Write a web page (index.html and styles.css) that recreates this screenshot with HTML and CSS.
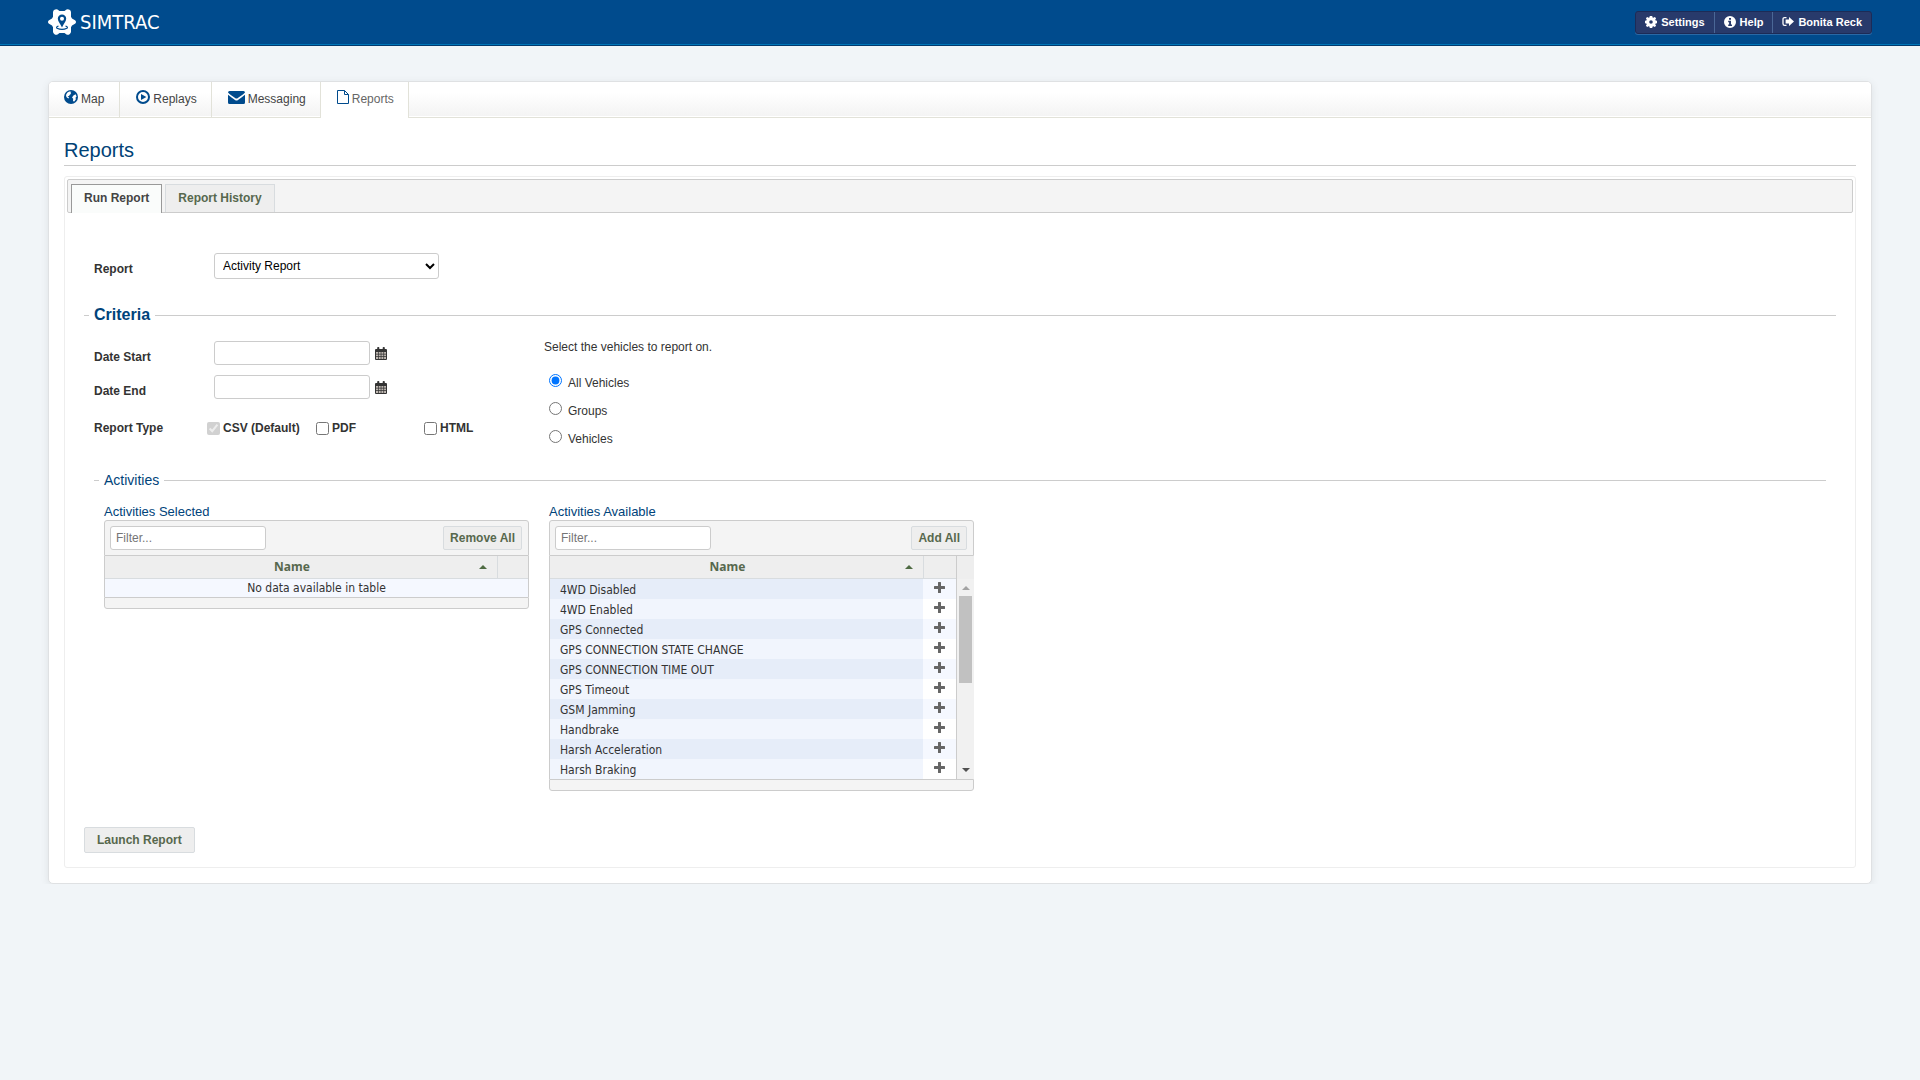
FILE: index.html
```html
<!DOCTYPE html>
<html lang="en">
<head>
<meta charset="utf-8">
<title>SIMTRAC - Reports</title>
<link rel="stylesheet" href="styles.css">
</head>
<body>
<svg class="sprite" aria-hidden="true">
  <symbol id="i-globe" viewBox="0 0 14 14"><circle cx="7" cy="7" r="7" fill="currentColor"/><path d="M3.200 2.800 5.200 1.500 7.400 1.700 6.400 3 7.200 3.800 5.800 4.800 5 6 3.600 6.200 5.200 7.800 4.200 8.400 2.400 7 2 5zM9.400 5.600l2.200-1.400 1 2.200-1 1.200.2 2-1.800 2.200-1-1 .2-2L8 7.600z" fill="#fff"/></symbol>
  <symbol id="i-play" viewBox="0 0 14 14"><circle cx="7" cy="7" r="6" fill="none" stroke="currentColor" stroke-width="2"/><path d="M5 3.900v6.200L10.400 7z" fill="currentColor"/></symbol>
  <symbol id="i-mail" viewBox="0 0 17 13"><path d="M1.500 0h14A1.500 1.500 0 0 1 17 1.500C16 3 12 5.500 9.600 7.200Q8.500 8 7.400 7.200C5 5.500 1 3 0 1.500A1.500 1.500 0 0 1 1.500 0zM0 3.800C2 5.600 5 7.400 7 8.900Q8.500 9.900 10 8.900C12 7.400 15 5.600 17 3.800V11.500A1.500 1.500 0 0 1 15.500 13h-14A1.500 1.500 0 0 1 0 11.500z" fill="currentColor"/></symbol>
  <symbol id="i-file" viewBox="0 0 12 14"><path d="M.5.5h7l4 4v9H.5zM7.500.5v4h4" fill="none" stroke="currentColor"/></symbol>
  <symbol id="i-cog" viewBox="0 0 12 12"><path d="M4.800 0h2.400l.4 1.500.8.3L9.800 1l1.300 1.300-.8 1.300.3.9 1.400.3v2.400l-1.400.4-.3.8.8 1.400-1.300 1.300-1.400-.8-.8.3-.4 1.400H4.800l-.4-1.400-.8-.3-1.400.8L.9 9.800l.8-1.400-.3-.8L0 7.200V4.800l1.400-.3.3-.9L.9 2.300 2.200 1l1.400.8.8-.3zM6 4.200a1.800 1.800 0 1 0 0 3.600 1.800 1.800 0 0 0 0-3.600z" fill="currentColor" fill-rule="evenodd"/></symbol>
  <symbol id="i-info" viewBox="0 0 12 12"><path d="M6 0a6 6 0 1 0 0 12A6 6 0 0 0 6 0zM5 2h2v1.700H5zM4.200 4.800H7v3.700h1V10H4.200V8.500h.9V6.200h-.9z" fill="currentColor" fill-rule="evenodd"/></symbol>
  <symbol id="i-out" viewBox="0 0 12 12"><path d="M4.500 1.600H2.600Q1 1.600 1 3.200v4.600q0 1.600 1.600 1.600h1.900" fill="none" stroke="currentColor" stroke-width="1.300"/><path d="M7 1l5 4.500L7 10V7.500H3.600v-4H7z" fill="currentColor"/></symbol>
  <symbol id="i-cal" viewBox="0 0 12 13"><path d="M1 2h1.200V.8q0-.8.8-.8h.5q.8 0 .8.800V2h3.400V.8q0-.8.8-.8H9q.8 0 .8.800V2H11q1 0 1 1v9q0 1-1 1H1q-1 0-1-1V3q0-1 1-1z" fill="currentColor"/><path d="M1 5h2v1.700H1zm2.700 0h2v1.700h-2zm2.700 0h2v1.700h-2zM9.100 5H11v1.700H9.100zM1 7.500h2v1.700H1zm2.700 0h2v1.700h-2zm2.700 0h2v1.700h-2zm2.700 0H11v1.700H9.100zM1 10h2v2H1zm2.700 0h2v2h-2zm2.700 0h2v2h-2zm2.700 0H11v2H9.100z" fill="#bfb8b2"/></symbol>
  <symbol id="i-plus" viewBox="0 0 11 11"><path d="M4 .6q0-.6.600-.6h1.800q.6 0 .6.600V4h3.400q.6 0 .6.600v1.800q0 .6-.6.600H7v3.400q0 .6-.6.600H4.600q-.6 0-.6-.6V7H.6Q0 7 0 6.400V4.600Q0 4 .6 4H4z" fill="currentColor"/></symbol>
</svg>

<header class="topbar">
  <a class="brand" href="#">
    <svg class="brand-mark" viewBox="0 0 28 26" aria-hidden="true"><path d="M6.500.8Q8-.2 9.500.6L11.500 2h5l2-1.400q1.500-.8 3 .2 1.500 1 1.500 2.400v4.500l1 1.800 3 1.700q1 .7 1 1.800t-1 1.800l-3 1.700-1 1.800v4.500q0 1.400-1.500 2.400t-3 .2l-2-1.400h-5l-2 1.400q-1.500.8-3-.2-1.500-1-1.500-2.400v-4.500l-1-1.800-3-1.700Q0 14.100 0 13t1-1.800l3-1.700 1-1.800V3.200Q5 1.800 6.500.8z" fill="#fff"/><path d="M14 5.500a4.200 4.200 0 0 0-4.200 4.200c0 2.600 2.700 5.500 4.200 8.700 1.500-3.200 4.200-6.100 4.200-8.700A4.200 4.200 0 0 0 14 5.500zm0 2.300a2 2 0 1 1 0 4 2 2 0 0 1 0-4z" fill="#004b8d" fill-rule="evenodd"/><path d="M10.500 17q-2.800 1-1.500 2.200 5 2.300 10 0 1.300-1.200-1.500-2.200" fill="none" stroke="#004b8d" stroke-width="1.200"/></svg>
    <span>SIMTRAC</span>
  </a>
  <nav class="user-menu">
    <a href="#"><svg><use href="#i-cog"/></svg>Settings</a>
    <a href="#"><svg><use href="#i-info"/></svg>Help</a>
    <a href="#"><svg><use href="#i-out"/></svg>Bonita Reck</a>
  </nav>
</header>

<main class="card">
  <nav class="main-tabs">
    <a href="#"><svg class="icon"><use href="#i-globe"/></svg>Map</a>
    <a href="#"><svg class="icon"><use href="#i-play"/></svg>Replays</a>
    <a href="#"><svg class="icon-mail"><use href="#i-mail"/></svg>Messaging</a>
    <a href="#" class="current"><svg class="icon-file"><use href="#i-file"/></svg>Reports</a>
  </nav>

  <div class="content">
    <h1>Reports</h1>
    <section class="panel">
      <nav class="sub-tabs">
        <a href="#" class="active">Run Report</a>
        <a href="#">Report History</a>
      </nav>

      <form class="report-form">
        <div class="row report-row">
          <label class="name" for="report">Report</label>
          <select id="report"><option>Activity Report</option></select>
        </div>

        <fieldset class="criteria">
          <legend>Criteria</legend>
          <div class="columns">
            <div class="dates">
              <div class="row date-row">
                <label class="name" for="start">Date Start</label>
                <input type="text" id="start">
                <svg class="cal"><use href="#i-cal"/></svg>
              </div>
              <div class="row date-row">
                <label class="name" for="end">Date End</label>
                <input type="text" id="end">
                <svg class="cal"><use href="#i-cal"/></svg>
              </div>
              <div class="row type-row">
                <span class="name">Report Type</span>
                <label class="check"><input type="checkbox" checked disabled>CSV (Default)</label>
                <label class="check"><input type="checkbox">PDF</label>
                <label class="check"><input type="checkbox">HTML</label>
              </div>
            </div>
            <div class="vehicles">
              <p>Select the vehicles to report on.</p>
              <label><input type="radio" name="scope" checked><span>All Vehicles</span></label>
              <label><input type="radio" name="scope"><span>Groups</span></label>
              <label><input type="radio" name="scope"><span>Vehicles</span></label>
            </div>
          </div>

          <fieldset class="activities">
            <legend>Activities</legend>
            <div class="lists">
              <section class="list">
                <h2>Activities Selected</h2>
                <div class="toolbar">
                  <input type="text" placeholder="Filter..." aria-label="Filter selected activities">
                  <button type="button">Remove All</button>
                </div>
                <table class="selected">
                  <thead><tr><th><div class="sort"><span>Name</span></div></th><th class="action"></th></tr></thead>
                  <tbody><tr><td colspan="2">No data available in table</td></tr></tbody>
                </table>
                <div class="foot"></div>
              </section>
              <section class="list">
                <h2>Activities Available</h2>
                <div class="toolbar">
                  <input type="text" placeholder="Filter..." aria-label="Filter available activities">
                  <button type="button">Add All</button>
                </div>
                <div class="scroller">
                  <table class="available">
                    <thead><tr><th><div class="sort"><span>Name</span></div></th><th class="action"></th></tr></thead>
                    <tbody>
                      <tr><td>4WD Disabled</td><td><svg><use href="#i-plus"/></svg></td></tr>
                      <tr><td>4WD Enabled</td><td><svg><use href="#i-plus"/></svg></td></tr>
                      <tr><td>GPS Connected</td><td><svg><use href="#i-plus"/></svg></td></tr>
                      <tr><td>GPS CONNECTION STATE CHANGE</td><td><svg><use href="#i-plus"/></svg></td></tr>
                      <tr><td>GPS CONNECTION TIME OUT</td><td><svg><use href="#i-plus"/></svg></td></tr>
                      <tr><td>GPS Timeout</td><td><svg><use href="#i-plus"/></svg></td></tr>
                      <tr><td>GSM Jamming</td><td><svg><use href="#i-plus"/></svg></td></tr>
                      <tr><td>Handbrake</td><td><svg><use href="#i-plus"/></svg></td></tr>
                      <tr><td>Harsh Acceleration</td><td><svg><use href="#i-plus"/></svg></td></tr>
                      <tr><td>Harsh Braking</td><td><svg><use href="#i-plus"/></svg></td></tr>
                    </tbody>
                  </table>
                  <div class="side">
                    <div class="side-head"></div>
                    <div class="scrollbar">
                      <span class="arrow up"></span>
                      <span class="thumb"></span>
                      <span class="arrow down"></span>
                    </div>
                  </div>
                </div>
                <div class="foot"></div>
              </section>
            </div>
          </fieldset>
        </fieldset>

        <button type="submit" class="launch">Launch Report</button>
      </form>
    </section>
  </div>
</main>
</body>
</html>
```
FILE: styles.css
```css
* { box-sizing: border-box; }

body {
  margin: 0;
  background: #f1f5f8;
  color: #333;
  font: 12px/18px "Liberation Sans", Arial, sans-serif;
}

a { color: inherit; text-decoration: none; }
svg { display: block; flex: none; }
.sprite { position: absolute; width: 0; height: 0; }

/* top bar */
.topbar {
  display: flex;
  justify-content: space-between;
  align-items: flex-start;
  height: 46px;
  padding: 9px 48px 0;
  background: #004b8d;
  border-bottom: 1px solid #003a70;
  box-shadow: inset 0 -1px #0076b8;
}
.brand {
  display: flex;
  align-items: center;
  gap: 4px;
  color: #fff;
  font: 20px/26px "DejaVu Sans Condensed", "DejaVu Sans", sans-serif;
}
.brand-mark { width: 28px; height: 26px; }
.user-menu {
  display: flex;
  height: 23px;
  margin-top: 2px;
  border: 1px solid #1c2b57;
  border-radius: 3px;
  background: #283a6b;
  box-shadow: 0 1px #2a68a5;
  color: #fff;
  font-size: 11px;
  font-weight: bold;
}
.user-menu a {
  display: flex;
  gap: 4px;
  padding: 1px 9px 0;
}
.user-menu a + a { border-left: 1px solid #4a6796; }
.user-menu svg { width: 12px; height: 12px; margin-top: 3px; }

/* page card */
.card {
  margin: 35px 48px 0;
  border: 1px solid #dfe1e3;
  border-radius: 5px;
  background: #fff;
  box-shadow: 0 2px 8px rgba(0, 0, 0, .08);
}
.main-tabs {
  display: flex;
  height: 36px;
  border-bottom: 1px solid #e2e2d9;
  border-radius: 4px 4px 0 0;
  background: linear-gradient(#fff 30%, #f3f3f3);
  box-shadow: inset 0 -1px #fff;
  color: #444;
}
.main-tabs a {
  display: flex;
  gap: 3px;
  padding: 8px 15px 0;
  border-right: 1px solid #e2e2d9;
}
.main-tabs a + a { padding: 8px 14px 0 16px; }
.main-tabs .current {
  height: 36px;
  background: #fff;
  color: #666;
}
.main-tabs svg { color: #004b8d; }
.icon { width: 14px; height: 14px; }
.icon-mail { width: 17px; height: 13px; margin-top: 1px; }
.icon-file { width: 12px; height: 14px; }

.content { padding: 18px 15px 15px; }
h1 {
  margin: 0 0 10px;
  padding-bottom: 1px;
  border-bottom: 1px solid #ccc;
  color: #004276;
  font: 20px/28px "Liberation Sans", Arial, sans-serif;
}

.panel {
  padding: 2px;
  border: 1px solid #eee;
  border-radius: 3px;
}
.sub-tabs {
  display: flex;
  gap: 3px;
  height: 34px;
  padding: 4px 3px 0;
  border: 1px solid #ccc;
  border-radius: 2px;
  background: #f4f4f4;
  font-weight: bold;
}
.sub-tabs a {
  height: 28px;
  padding: 4px 12px;
  border: 1px solid #d8dcdf;
  border-bottom: 0;
  background: #eee;
  color: #57684d;
}
.sub-tabs .active {
  height: 29px;
  border-color: #999;
  background: #fafcfb;
  color: #444;
}

/* form */
.report-form { padding: 40px 17px 12px; }
.row { display: flex; }
.name { width: 120px; font-weight: bold; }
.report-row { height: 26px; margin: 0 10px; }
.report-row .name { padding-top: 7px; }
input, select, button { font: inherit; margin: 0; }
select {
  width: 225px;
  height: 26px;
  padding: 0 4px;
  border: 1px solid #ccc;
  border-radius: 3px;
  background: #fff;
  color: #000;
}
input[type="text"] {
  width: 156px;
  height: 24px;
  padding: 0 5px;
  border: 1px solid #ccc;
  border-radius: 3px;
  background: #fff;
}
fieldset {
  min-width: 0;
  margin: 0;
  padding: 0;
  border: 0;
  border-top: 1px solid #ccc;
}
legend { margin-left: 5px; padding: 0 5px; color: #00437a; }
.criteria { margin-top: 26px; }
.criteria > legend { font-size: 16px; font-weight: bold; line-height: 20px; }
.columns {
  display: flex;
  gap: 20px;
  padding: 16px 10px 0;
}
.dates { width: 430px; }
.date-row { height: 34px; }
.date-row .name { padding-top: 7px; }
.cal { width: 12px; height: 13px; margin: 6px 0 0 5px; }
.type-row {
  display: grid;
  grid-template-columns: 113px 109px 108px 100px;
  padding-top: 10px;
}
.check {
  display: flex;
  align-items: center;
  gap: 3px;
  font-weight: bold;
}
input[type="checkbox"], input[type="radio"] { width: 13px; height: 13px; }
.vehicles p { margin: -3px 0 14px; }
.vehicles label {
  display: flex;
  gap: 6px;
  height: 28px;
  padding: 4px 5px 0;
}

.activities { margin: 17px 10px 0; }
.activities > legend { font-size: 14px; line-height: 18px; }
.lists {
  display: flex;
  align-items: flex-start;
  gap: 20px;
  padding: 14px 10px 0;
}
.list { width: 425px; }
h2 {
  margin: 0;
  color: #00437a;
  font: 13px/17px "Liberation Sans", Arial, sans-serif;
}
.toolbar {
  display: flex;
  justify-content: space-between;
  height: 36px;
  padding: 5px 6px 0 5px;
  border: 1px solid #ccc;
  border-radius: 3px 3px 0 0;
  background: #f4f4f4;
}
button {
  height: 24px;
  padding: 0 6px;
  border: 1px solid #d8dcdf;
  border-radius: 2px;
  background: #eee;
  color: #57684d;
  font-weight: bold;
}
table {
  width: 100%;
  border-collapse: separate;
  border-spacing: 0;
  table-layout: fixed;
  font: 12px/18px "DejaVu Sans Condensed", "DejaVu Sans", sans-serif;
}
th {
  height: 23px;
  padding: 0 10px 0 0;
  border-bottom: 1px solid #d8dcdf;
  background: #eee;
  color: #57684d;
  font-family: "Noto Sans", sans-serif;
}
th.action { border-left: 1px solid #d8dcdf; }
td { height: 20px; padding: 0; }
.sort { display: flex; align-items: center; }
.sort span { flex: 1; }
.sort::after {
  content: "";
  border: 4px solid transparent;
  border-top: 0;
  border-bottom-color: #4f6b43;
}
.selected { border: solid #ccc; border-width: 0 1px; }
.selected .action { width: 31px; }
.selected td {
  height: 18px;
  background: #f5f8ff;
  text-align: center;
}
.scroller { display: flex; }
.available {
  width: auto;
  flex: 1;
  border: solid #ccc;
  border-width: 0 1px;
}
.available .action { width: 33px; }
.available td:first-child { padding: 2px 0 0 10px; background: #f1f5fd; }
.available tr:nth-child(odd) td:first-child { background: #e6edf9; }
.available tr:nth-child(odd) td:last-child { background: #f5f8ff; }
.available td svg { width: 11px; height: 11px; margin: -3px auto 0; color: #666; }
.side { display: flex; flex-direction: column; width: 17px; }
.side-head { height: 23px; background: #eee; }
.scrollbar {
  display: flex;
  flex: 1;
  flex-direction: column;
  align-items: center;
  background: #f1f1f1;
}
.arrow {
  width: 0;
  border: 4px solid transparent;
}
.up { margin: 3px 0 6px; border-bottom-color: #a3a3a3; }
.down { margin: auto 0 3px; border-top-color: #505050; }
.thumb { width: 13px; height: 87px; background: #c1c1c1; }
.foot {
  height: 12px;
  border: 1px solid #ccc;
  border-radius: 0 0 3px 3px;
  background: #f4f4f4;
}
.launch { height: 26px; margin-top: 36px; padding: 0 12px; }
```
